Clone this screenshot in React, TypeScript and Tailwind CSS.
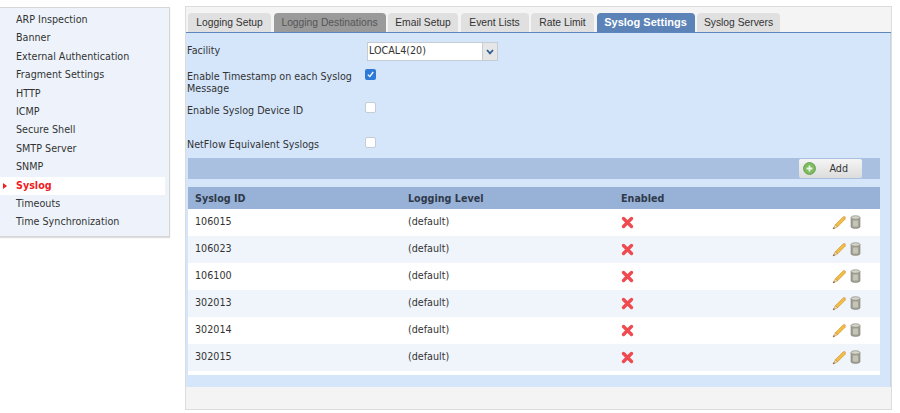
const menuItems = [
  "ARP Inspection",
  "Banner",
  "External Authentication",
  "Fragment Settings",
  "HTTP",
  "ICMP",
  "Secure Shell",
  "SMTP Server",
  "SNMP",
  "Syslog",
  "Timeouts",
  "Time Synchronization",
];

const tabs = [
  { label: "Logging Setup", width: "w-[83px]" },
  { label: "Logging Destinations", width: "w-[112px]" },
  { label: "Email Setup", width: "w-[70px]" },
  { label: "Event Lists", width: "w-[68px]" },
  { label: "Rate Limit", width: "w-[63px]" },
  { label: "Syslog Settings", width: "w-[98px]" },
  { label: "Syslog Servers", width: "w-[83px]" },
];

const rows = ["106015", "106023", "106100", "302013", "302014", "302015"];

function RedX() {
  return (
    <svg width="13" height="13" viewBox="0 0 13 13">
      <path d="M2.5 2.5 L10.5 10.5 M10.5 2.5 L2.5 10.5" stroke="#ef4a4f" strokeWidth="3.4" strokeLinecap="round" />
    </svg>
  );
}

function Pencil() {
  return (
    <svg width="15" height="15" viewBox="0 0 14 14">
      <path d="M3.2 9 L10.6 1.6 L12.6 3.6 L5.2 11 Z" fill="#f0bd45" stroke="#d08f25" strokeWidth="0.6" />
      <path d="M10.6 1.6 L12.6 3.6 L13 3 Q13 1.6 11.4 1 Z" fill="#e8a76a" />
      <path d="M3.2 9 L5.2 11 L1 13 Z" fill="#f1d9a8" stroke="#b97a2a" strokeWidth="0.5" />
      <path d="M1 13 L1.7 11.4 L2.7 12.3 Z" fill="#5a4020" />
    </svg>
  );
}

function Trash() {
  return (
    <svg width="11" height="14" viewBox="0 0 11 14">
      <path d="M1 2.5 V11.8 Q1 13.4 5.5 13.4 Q10 13.4 10 11.8 V2.5 Z" fill="#a3a394" stroke="#7c7c70" strokeWidth="0.6" />
      <ellipse cx="5.5" cy="2.5" rx="4.5" ry="1.8" fill="#d4d4cb" stroke="#7c7c70" strokeWidth="0.6" />
      <rect x="3" y="5.5" width="5" height="6" rx="0.8" fill="#c4c4b8" />
    </svg>
  );
}

function App() {
  return (
    <div className="w-[900px] h-[413px] overflow-hidden bg-white flex items-start text-[9.6px] text-[#333] font-['DejaVu_Sans',sans-serif]">
      <div className="w-[170px] mt-[7px] pt-[3px] pb-[4px] pr-[4px] bg-[#eef3fb] border border-l-0 border-[#d6d6d6] shadow-[0_1px_1px_#ddd] flex flex-col">
        {menuItems.map((item) => (
          <div
            key={item}
            className={
              item === "Syslog"
                ? "h-[18.4px] pl-[16px] flex items-center relative bg-white text-[#f01c24] font-bold"
                : "h-[18.4px] pl-[16px] flex items-center"
            }
          >
            {item === "Syslog" && (
              <span className="absolute left-[3px] top-[6.5px] w-0 h-0 border-y-[3px] border-y-transparent border-l-[4px] border-l-[#f01c24]" />
            )}
            {item}
          </div>
        ))}
      </div>

      <div className="w-[707px] h-[404px] ml-[15px] mt-[6px] flex flex-col bg-[#f4f4f4] border border-[#dcdcdc]">
        <div className="h-[26px] pt-[6px] pl-[2px] flex gap-[2.5px] border-b-[1px] border-[#5d86bd] text-[10.3px] font-['Liberation_Sans',sans-serif]">
          {tabs.map((tab) => (
            <div
              key={tab.label}
              className={
                tab.label === "Syslog Settings"
                  ? `${tab.width} rounded-t-[4px] bg-[#5b83b8] text-white text-[11px] font-bold flex items-center justify-center`
                  : tab.label === "Logging Destinations"
                    ? `${tab.width} rounded-t-[4px] bg-[#9a9a9a] text-[#555] flex items-center justify-center`
                    : `${tab.width} rounded-t-[4px] bg-[#e0e0e0] text-[#333] flex items-center justify-center`
              }
            >
              {tab.label}
            </div>
          ))}
        </div>

        <div className="h-[354px] pl-[2px] pr-[10px] bg-[#d5e6fb] border-r border-[#c9d3df] flex flex-col">
          <div className="h-[125px] -ml-[1px]">
            <div className="h-[38px] flex items-start">
              <span className="w-[180px] mt-[11px]">Facility</span>
              <div className="w-[131px] h-[19px] mt-[9px] flex bg-white border border-[#c6ccd4]">
                <span className="flex-1 pl-[1px] flex items-center">LOCAL4(20)</span>
                <span className="w-[15px] bg-[#e6e6e6] border-l border-[#c6ccd4] flex items-center justify-center">
                  <svg width="8" height="6" viewBox="0 0 8 6">
                    <path d="M1 1 L4 4.4 L7 1" fill="none" stroke="#2f5c92" strokeWidth="1.7" />
                  </svg>
                </span>
              </div>
            </div>
            <div className="h-[33px] flex items-start">
              <span className="w-[178px] leading-[12px]">Enable Timestamp on each Syslog Message</span>
              <span className="w-[11px] h-[11px] -mt-[2px] rounded-[2px] bg-[#2f79d9] flex items-center justify-center">
                <svg width="9" height="9" viewBox="0 0 9 9">
                  <path d="M1.8 4.6 L3.8 6.6 L7.2 2" fill="none" stroke="#fff" strokeWidth="1.3" />
                </svg>
              </span>
            </div>
            <div className="h-[34px] flex items-start">
              <span className="w-[178px]">Enable Syslog Device ID</span>
              <span className="w-[11px] h-[11px] -mt-[2px] rounded-[2px] bg-white border border-[#c4ccd6]" />
            </div>
            <div className="flex items-start">
              <span className="w-[178px]">NetFlow Equivalent Syslogs</span>
              <span className="w-[11px] h-[11px] -mt-[1px] rounded-[2px] bg-white border border-[#c4ccd6]" />
            </div>
          </div>

          <div className="h-[21px] bg-[#a9c0e0] pr-[18px] flex justify-end items-center">
            <div className="w-[63px] h-[19px] pl-[4px] pr-[14px] rounded-[2px] flex items-center justify-between bg-gradient-to-b from-[#f5f5f5] to-[#dcdcdc]">
              <svg width="13" height="13" viewBox="0 0 13 13">
                <circle cx="6.5" cy="6.5" r="6" fill="#7cbb5f" stroke="#5d9c45" strokeWidth="0.8" />
                <path d="M6.5 3.5 V9.5 M3.5 6.5 H9.5" stroke="#eaf6e2" strokeWidth="1.8" />
              </svg>
              <span className="mt-[1px]">Add</span>
            </div>
          </div>

          <div className="mt-[8px] flex flex-col bg-white pb-[4px]">
            <div className="h-[22px] grid grid-cols-[213px_213px_1fr] pl-[7px] items-center bg-[#98b1d7] font-bold text-[#2f3a4a] pt-[3px]">
              <span>Syslog ID</span>
              <span>Logging Level</span>
              <span>Enabled</span>
            </div>
            {rows.map((id, index) => (
              <div
                key={id}
                className={
                  index % 2 === 0
                    ? "h-[27px] grid grid-cols-[213px_213px_1fr_auto] pl-[7px] pr-[19px] items-center bg-white"
                    : "h-[27px] grid grid-cols-[213px_213px_1fr_auto] pl-[7px] pr-[19px] items-center bg-[#f0f5fb]"
                }
              >
                <span className="-mt-[1px]">{id}</span>
                <span className="-mt-[1px]">(default)</span>
                <span className="-mt-[1px]">
                  <RedX />
                </span>
                <span className="flex gap-[3px] items-center -mt-[1px]">
                  <Pencil />
                  <Trash />
                </span>
              </div>
            ))}
          </div>
        </div>
      </div>
    </div>
  );
}

export default App;
